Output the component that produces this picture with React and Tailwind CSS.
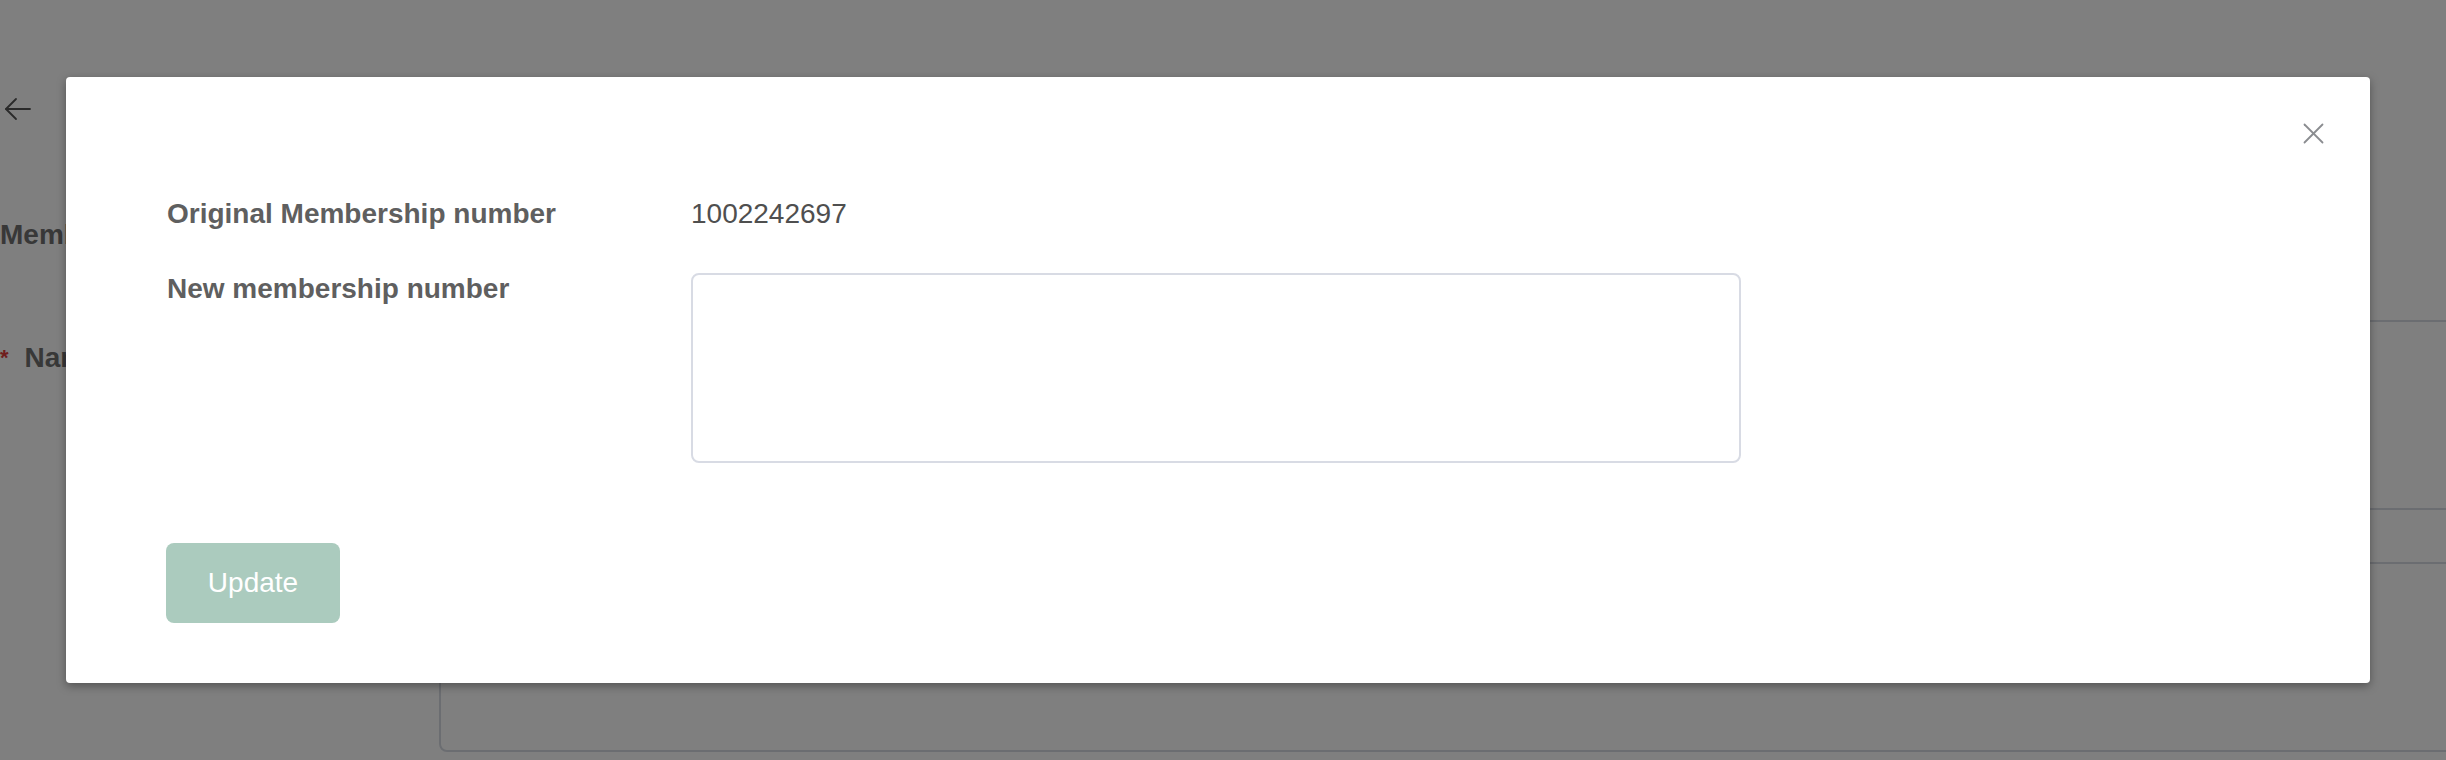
export default function App() {
  return (
    <div className="relative h-[760px] w-full overflow-hidden bg-white font-['Liberation_Sans',Arial,sans-serif]">
      {/* Background page */}
      <div className="flex flex-col">
        <div className="pt-[97px] pl-[4px]">
          <svg width="27" height="24" viewBox="0 0 27 24" fill="none" stroke="#555" strokeWidth="1.8" strokeLinecap="round" strokeLinejoin="round">
            <path d="M26 12H2" />
            <path d="M12 2L2 12l10 10" />
          </svg>
        </div>
        <div className="mt-[93px] text-[28px] leading-[42px] font-bold text-[#707070] whitespace-nowrap">Membership</div>
        <div className="mt-[64px] flex">
          <div className="w-[439px] shrink-0 pt-[17px] text-[28px] leading-[42px] font-bold text-[#707070] whitespace-nowrap">
            <span className="text-[#e03a3a] text-[22px] align-top">*</span>
            <span className="ml-[16px]">Name</span>
          </div>
          <div className="h-[190px] w-[2100px] shrink-0 rounded-[8px] border-2 border-[#d7dbe3]"></div>
        </div>
        <div className="mt-[52px] flex">
          <div className="w-[439px] shrink-0"></div>
          <div className="h-[190px] w-[2100px] shrink-0 rounded-[8px] border-2 border-[#d7dbe3]"></div>
        </div>
      </div>

      {/* Overlay */}
      <div className="absolute inset-0 bg-black/50"></div>

      {/* Modal */}
      <div className="absolute left-[66px] top-[77px] w-[2304px] rounded-[4px] bg-white pl-[100px] pt-[116px] pb-[60px] shadow-[0_3px_10px_rgba(0,0,0,0.35)]">
        <button className="absolute right-[46px] top-[46px] flex h-[21px] w-[21px] items-center justify-center">
          <svg width="21" height="21" viewBox="0 0 21 21" fill="none" stroke="#8a8c90" strokeWidth="1.8" strokeLinecap="round">
            <path d="M1.5 1.5l18 18" />
            <path d="M19.5 1.5l-18 18" />
          </svg>
        </button>

        <div className="flex">
          <div className="w-[525px] shrink-0 pl-[1px] text-[28px] leading-[42px] font-bold text-[#5f5f5f]">
            Original Membership number
          </div>
          <div className="text-[28px] leading-[42px] text-[#4f4f4f]">1002242697</div>
        </div>

        <div className="mt-[33px] flex">
          <div className="w-[525px] shrink-0 pl-[1px] text-[28px] leading-[42px] font-bold text-[#5f5f5f]">
            New membership number
          </div>
          <textarea className="mt-[5px] h-[190px] w-[1050px] resize-none rounded-[8px] border-2 border-[#d8dbe4] bg-white outline-none"></textarea>
        </div>

        <button className="mt-[80px] flex h-[80px] w-[174px] items-center justify-center rounded-[8px] bg-[#abcbbe] text-[28px] text-white">
          Update
        </button>
      </div>
    </div>
  );
}
